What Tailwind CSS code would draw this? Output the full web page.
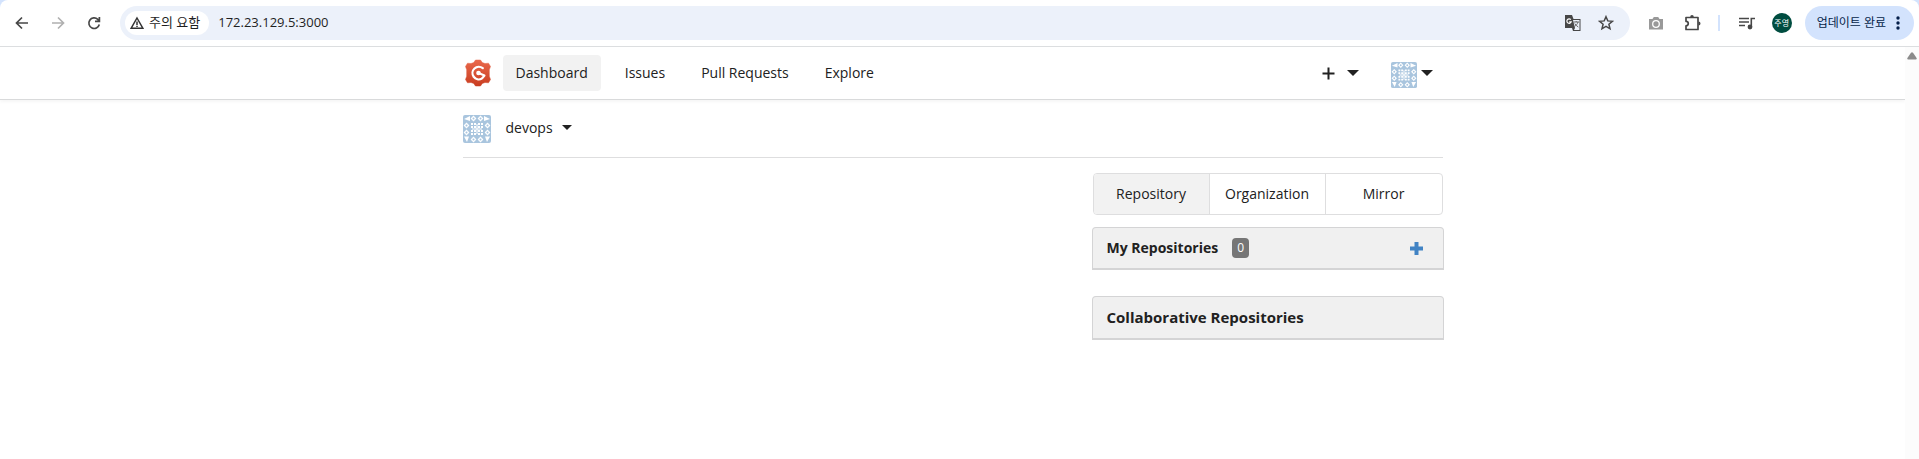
<!DOCTYPE html>
<html lang="ko">
<head>
    <meta charset="UTF-8">
    <meta name="viewport" content="width=device-width, initial-scale=1.0">
    <title>devops - Dashboard</title>
    <script src="https://cdn.jsdelivr.net/npm/@tailwindcss/browser@4"></script>
</head>
<body class="min-h-screen flex flex-col bg-white text-[#212121] font-['Open_Sans','Noto_Sans_CJK_KR',sans-serif] text-sm">
<!-- Shared symbols -->
<svg class="hidden">
    <symbol id="identicon" viewBox="0 0 28 28">
        <rect width="28" height="28" rx="2" fill="#a9c5de"/>
        <g id="identicon-quarter" fill="#fff">
            <path d="M10.500 0.600l2.900 2.900-2.900 2.900-2.900-2.900z"/>
            <path d="M3.500 7.600l2.900 2.900-2.900 2.900-2.900-2.900z"/>
            <path d="M8 8h2v2H8zM11 8h2v2h-2zM8 11h2v2H8zM11 11h2v2h-2z"/>
            <path d="M13.500 9H14v5H9v-.5h4.500z"/>
            <circle cx="10.500" cy="3.500" r="1" fill="#a9c5de"/>
            <circle cx="3.500" cy="10.500" r="1" fill="#a9c5de"/>
        </g>
        <use href="#identicon-quarter" transform="matrix(-1 0 0 1 28 0)"/>
        <use href="#identicon-quarter" transform="matrix(1 0 0 -1 0 28)"/>
        <use href="#identicon-quarter" transform="matrix(-1 0 0 -1 28 28)"/>
        <path d="M1 4l6-3v5zM27 4l-6-3v5zM1 21.500h5L4 27zM27 21.500h-5l2 5.500z" fill="#fff"/>
    </symbol>
    <symbol id="caret" viewBox="0 0 12 6">
        <path d="M0 0h12L6 6z" fill="currentColor"/>
    </symbol>
</svg>

<!-- Browser toolbar -->
<div class="bg-[#d3e3fd]">
    <div class="h-[47px] flex items-center pl-3 pr-[5px] pb-px bg-white border-b border-[#dcdee0] rounded-t-lg text-[#474747]">
        <button aria-label="Back" class="w-5 h-5 mr-4"><svg viewBox="0 0 20 20" fill="none" stroke="currentColor" stroke-width="1.700"><path d="M16 10H5M10 4.500L4.500 10l5.500 5.500"/></svg></button>
        <button aria-label="Forward" class="w-5 h-5 mr-4 text-[#b0b0b0]"><svg viewBox="0 0 20 20" fill="none" stroke="currentColor" stroke-width="1.700"><path d="M4 10h11M10 4.500l5.500 5.500-5.500 5.500"/></svg></button>
        <button aria-label="Reload" class="w-5 h-5 mr-4"><svg viewBox="0 0 20 20" fill="none" stroke="currentColor" stroke-width="1.700"><path d="M15.300 11.500a5.300 5.300 0 1 1-1.500-5.200l1.500 1.500M15.400 4v4.300h-4.400"/></svg></button>
        <div class="flex-1 h-[34px] flex items-center pl-[5px] pr-4 rounded-full bg-[#ecf1fa]">
            <button class="h-6 flex items-center gap-[5px] px-[5px] mr-[9px] rounded-full bg-white text-[13px] text-[#1f1f1f]">
                <svg class="w-[14px] h-[14px]" viewBox="0 0 14 14" fill="none" stroke="#333" stroke-width="1.500"><path d="M7 2L12.800 12.200H1.200zM7 5.500v3.500M7 9.800v1.300"/></svg>
                <span class="pr-1">주의 요함</span>
            </button>
            <input type="text" aria-label="Address" value="172.23.129.5:3000" class="flex-1 min-w-0 bg-transparent outline-none text-[13px] text-[#1f1f1f]">
            <div class="flex items-center gap-4">
                <button aria-label="Translate" class="w-[18px] h-[18px]">
                    <svg viewBox="0 0 18 18"><path d="M1 1h7l1.500 4H16.500v12H9l-1-3H1z" fill="#474747"/><path d="M9 6h6.500v10H10l1-2z" fill="#ecf1fa"/><path d="M6.800 5.700a2.200 2.200 0 1 0 .4 2.200H5.200" fill="none" stroke="#fff" stroke-width="1.200"/><path d="M9.500 8h5.500M12.200 7v1M14 8c-.5 2-2 3.500-3.500 4.500M10.800 9.500c.8 1.500 2 2.500 3.500 3.500" fill="none" stroke="#666" stroke-width="1"/></svg>
                </button>
                <button aria-label="Bookmark" class="w-4 h-4"><svg viewBox="0 0 16 16" fill="none" stroke="currentColor" stroke-width="1.500"><path d="M8 1.700l1.800 4.200 4.600.4-3.500 3 1.100 4.500L8 11.400l-4 2.400 1.100-4.500-3.500-3 4.600-.4z"/></svg></button>
            </div>
        </div>
        <div class="flex items-center ml-[18px] mr-[13px]">
            <button aria-label="Capture" class="w-4 h-4 mr-5"><svg viewBox="0 0 16 16"><path d="M1 4h3.500l1.300-2h4.400l1.300 2H15v10.500H1z" fill="#999"/><circle cx="8" cy="9" r="3.300" fill="none" stroke="#fff" stroke-width="1.300"/></svg></button>
            <button aria-label="Extensions" class="w-[18px] h-[18px] mr-4"><svg viewBox="0 0 18 18"><path d="M2 3.500h12V8v7.500H2v-3.700a2 2 0 0 0 0-4.500z" fill="none" stroke="currentColor" stroke-width="1.700" stroke-linejoin="round"/><path d="M6.200 3a1.800 2 0 0 1 3.600 0zM14.500 7.500a2 2 0 0 1 0 4z" fill="currentColor"/></svg></button>
            <span class="w-0.5 h-4 mr-[18px] bg-[#d3e3fd]"></span>
            <button aria-label="Media" class="w-[18px] h-[18px] mr-4"><svg viewBox="0 0 18 18" fill="none" stroke="currentColor" stroke-width="1.600"><path d="M1 4.500h10M1 8h10M1 11.500h6M13.300 13V4.500H17"/><circle cx="12" cy="13" r="1.600" fill="currentColor"/></svg></button>
            <button class="w-5 h-5 rounded-full bg-[#004d40] text-white text-[8px] leading-5 text-center">주영</button>
        </div>
        <button class="h-[34px] flex items-center gap-1 pl-3 pr-2 rounded-full bg-[#d3e3fd] text-[#041e49] text-xs">
            <span>업데이트 완료</span>
            <svg class="w-4 h-4" viewBox="0 0 16 16" fill="currentColor"><circle cx="8" cy="3" r="1.700"/><circle cx="8" cy="8" r="1.700"/><circle cx="8" cy="13" r="1.700"/></svg>
        </button>
    </div>
</div>

<!-- Page and scrollbar -->
<div class="flex-1 flex">
    <div class="flex-1">
        <nav class="border-b border-[#d9dadb] shadow-[0_2px_3px_rgba(0,0,0,0.04)]">
            <div class="max-w-[980px] mx-auto h-[52px] flex items-center">
                <a href="#" aria-label="Home" class="mr-[11px] pl-px">
                    <svg class="w-7 h-7" viewBox="0 0 28 28">
                        <defs><linearGradient id="logo-red" x1="0" y1="0" x2="0" y2="1"><stop offset="0" stop-color="#e9694c"/><stop offset="1" stop-color="#c93d20"/></linearGradient></defs>
                        <path d="M11.500 1h5l1.800 2.600 2.700.9 3.500-.3 2 3.300-1.200 3.200v6.600l1.200 3.200-2 3.300-3.500-.3-2.700.9-1.800 2.600h-5l-1.800-2.600-2.700-.9-3.500.3-2-3.300 1.200-3.200v-6.600L1.500 7.500l2-3.300 3.500.3 2.700-.9z" fill="url(#logo-red)" stroke="url(#logo-red)" stroke-width=".5" stroke-linejoin="round"/>
                        <path d="M18.800 9.200a6.300 6.300 0 1 0-1 10.400" fill="none" stroke="#fff" stroke-width="2.200" stroke-linecap="round"/>
                        <path d="M14.500 14l6 2.500-2.500 3" fill="none" stroke="#fff" stroke-width="2" stroke-linejoin="round"/>
                        <circle cx="14.500" cy="14" r="2.300" fill="#fff"/>
                    </svg>
                </a>
                <div class="flex gap-[10px]">
                    <a href="#" class="h-9 px-[13px] mr-px flex items-center rounded bg-[#f2f2f2]">Dashboard</a>
                    <a href="#" class="h-9 px-[13px] flex items-center rounded">Issues</a>
                    <a href="#" class="h-9 px-[13px] flex items-center rounded">Pull Requests</a>
                    <a href="#" class="h-9 px-[13px] flex items-center rounded">Explore</a>
                </div>
                <div class="ml-auto pr-[10px] flex items-center gap-8">
                    <button aria-label="Create" class="flex items-center gap-3">
                        <svg class="w-[13px] h-[13px]" viewBox="0 0 13 13" stroke="currentColor" stroke-width="2"><path d="M6.500 .5v12M.5 6.500h12"/></svg>
                        <svg class="w-3 h-[6px]"><use href="#caret"/></svg>
                    </button>
                    <button aria-label="Account" class="flex items-center gap-1 pt-1">
                        <svg class="w-[26px] h-[26px]"><use href="#identicon"/></svg>
                        <svg class="w-3 h-[6px] mb-1"><use href="#caret"/></svg>
                    </button>
                </div>
            </div>
        </nav>

        <main class="max-w-[980px] mx-auto">
            <div class="h-[58px] flex items-center border-b border-[#dededf]">
                <svg class="w-7 h-7 mr-[15px]"><use href="#identicon"/></svg>
                <button class="flex items-center gap-[9px] pb-0.5">devops <svg class="w-[10px] h-[5px]"><use href="#caret"/></svg></button>
            </div>

            <div class="w-[352px] ml-auto -mr-px pt-[15px]">
                <div class="mx-px h-[42px] grid grid-cols-3 divide-x divide-[#dededf] border border-[#dededf] rounded overflow-hidden">
                    <button class="bg-[#f2f2f2]">Repository</button>
                    <button>Organization</button>
                    <button>Mirror</button>
                </div>
                <section class="mt-3 mb-[26px] h-[43px] px-[14px] flex items-center bg-[#f0f0f0] border border-b-2 border-[#d4d4d5] rounded-t">
                    <h4 class="text-sm font-bold">My Repositories</h4>
                    <span class="ml-[14px] w-[17px] h-5 rounded-sm bg-[#767676] text-white text-xs leading-5 text-center">0</span>
                    <a href="#" aria-label="New repository" class="ml-auto mr-[6px] text-[#4183c4]"><svg class="w-[13px] h-[13px]" viewBox="0 0 13 13" stroke="currentColor" stroke-width="4"><path d="M6.500 0v13M0 6.500h13"/></svg></a>
                </section>
                <section class="h-11 px-[14px] flex items-center bg-[#f0f0f0] border border-b-2 border-[#d4d4d5] rounded-t">
                    <h4 class="text-[15px] font-bold">Collaborative Repositories</h4>
                </section>
            </div>
        </main>
    </div>
    <div class="w-[14px] pt-[5px] bg-[#fcfcfc]">
        <svg class="w-[10px] h-2 mx-auto" viewBox="0 0 10 8"><path d="M4 .8q1-1 2 0l3.600 5.200q.6 1.500-1 1.500H1.400q-1.600 0-1-1.500z" fill="#8b8b8b"/></svg>
    </div>
</div>
</body>
</html>
